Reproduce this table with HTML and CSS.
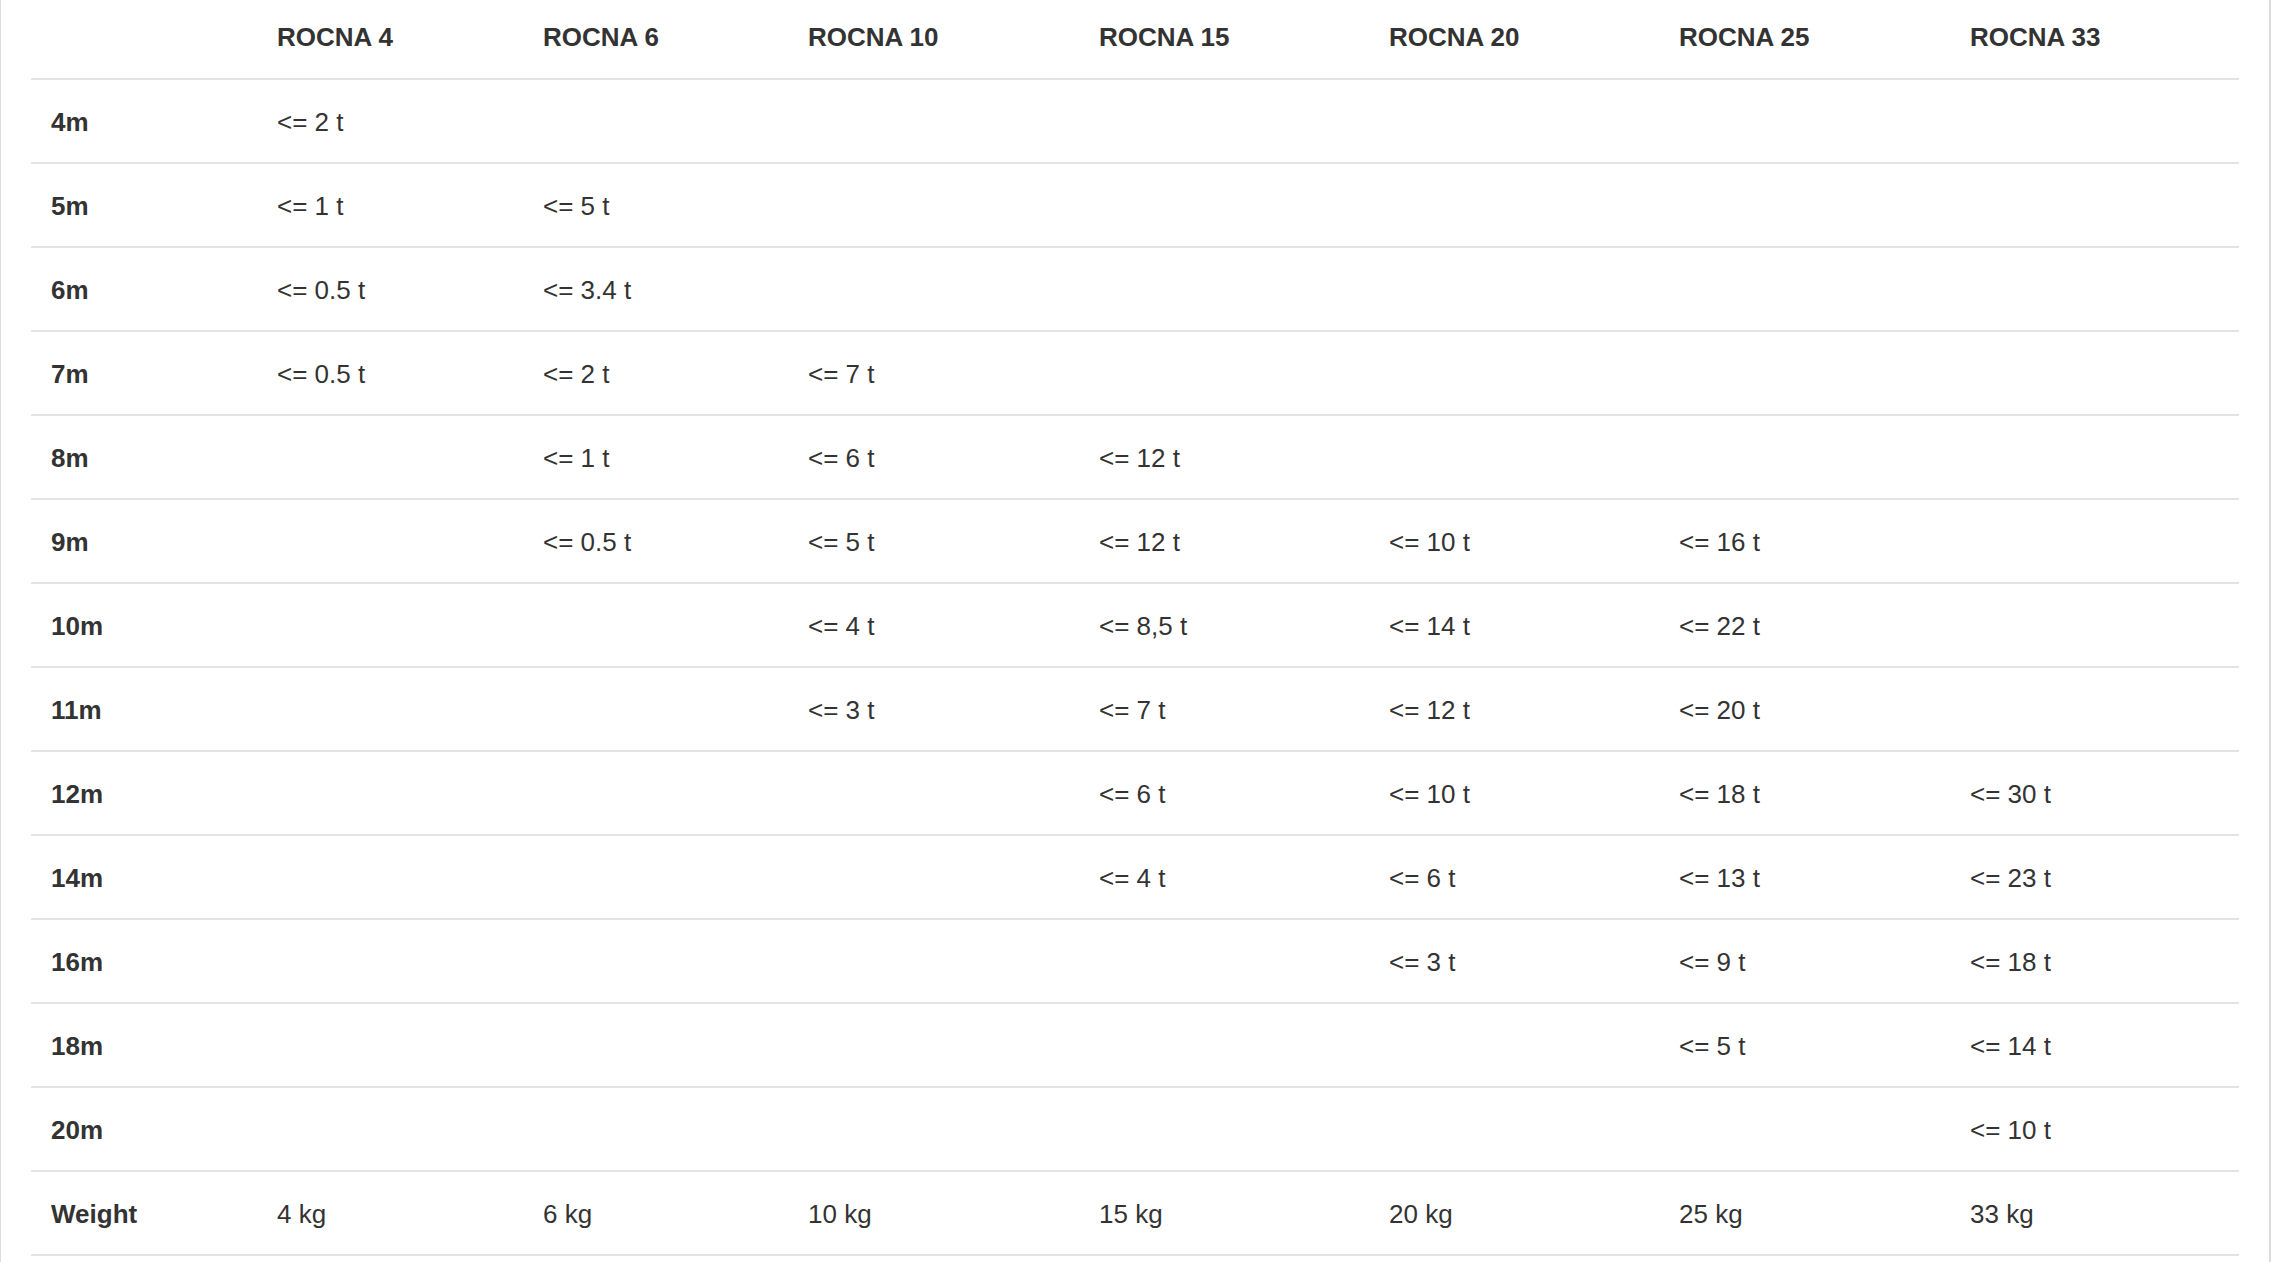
FILE: index.html
```html
<!DOCTYPE html>
<html>
<head>
<meta charset="utf-8">
<link rel="stylesheet" href="styles.css">
</head>
<body>
<div class="page">
<table class="specs">
<colgroup>
<col class="c-label"><col class="c1"><col class="c2"><col class="c3"><col class="c4"><col class="c5"><col class="c6"><col class="c7">
</colgroup>
<thead>
<tr><th></th><th>ROCNA 4</th><th>ROCNA 6</th><th>ROCNA 10</th><th>ROCNA 15</th><th>ROCNA 20</th><th>ROCNA 25</th><th>ROCNA 33</th></tr>
</thead>
<tbody>
<tr><th>4m</th><td>&lt;= 2 t</td><td></td><td></td><td></td><td></td><td></td><td></td></tr>
<tr><th>5m</th><td>&lt;= 1 t</td><td>&lt;= 5 t</td><td></td><td></td><td></td><td></td><td></td></tr>
<tr><th>6m</th><td>&lt;= 0.5 t</td><td>&lt;= 3.4 t</td><td></td><td></td><td></td><td></td><td></td></tr>
<tr><th>7m</th><td>&lt;= 0.5 t</td><td>&lt;= 2 t</td><td>&lt;= 7 t</td><td></td><td></td><td></td><td></td></tr>
<tr><th>8m</th><td></td><td>&lt;= 1 t</td><td>&lt;= 6 t</td><td>&lt;= 12 t</td><td></td><td></td><td></td></tr>
<tr><th>9m</th><td></td><td>&lt;= 0.5 t</td><td>&lt;= 5 t</td><td>&lt;= 12 t</td><td>&lt;= 10 t</td><td>&lt;= 16 t</td><td></td></tr>
<tr><th>10m</th><td></td><td></td><td>&lt;= 4 t</td><td>&lt;= 8,5 t</td><td>&lt;= 14 t</td><td>&lt;= 22 t</td><td></td></tr>
<tr><th>11m</th><td></td><td></td><td>&lt;= 3 t</td><td>&lt;= 7 t</td><td>&lt;= 12 t</td><td>&lt;= 20 t</td><td></td></tr>
<tr><th>12m</th><td></td><td></td><td></td><td>&lt;= 6 t</td><td>&lt;= 10 t</td><td>&lt;= 18 t</td><td>&lt;= 30 t</td></tr>
<tr><th>14m</th><td></td><td></td><td></td><td>&lt;= 4 t</td><td>&lt;= 6 t</td><td>&lt;= 13 t</td><td>&lt;= 23 t</td></tr>
<tr><th>16m</th><td></td><td></td><td></td><td></td><td>&lt;= 3 t</td><td>&lt;= 9 t</td><td>&lt;= 18 t</td></tr>
<tr><th>18m</th><td></td><td></td><td></td><td></td><td></td><td>&lt;= 5 t</td><td>&lt;= 14 t</td></tr>
<tr><th>20m</th><td></td><td></td><td></td><td></td><td></td><td></td><td>&lt;= 10 t</td></tr>
<tr><th>Weight</th><td>4 kg</td><td>6 kg</td><td>10 kg</td><td>15 kg</td><td>20 kg</td><td>25 kg</td><td>33 kg</td></tr>
</tbody>
</table>
</div>
</body>
</html>
```

FILE: styles.css
```css
html, body {
  margin: 0;
  padding: 0;
  background: #ffffff;
}

.page {
  width: 2208px;
  min-height: 100vh;
  padding: 0 30px;
  border-left: 1px solid #dcdcdc;
  border-right: 2px solid #dcdcdc;
  box-sizing: content-box;
  font-family: "Liberation Sans", Arial, Helvetica, sans-serif;
  color: #333333;
}

.specs {
  width: 2208px;
  table-layout: fixed;
  border-collapse: separate;
  border-spacing: 0;
  font-size: 26px;
  line-height: 30px;
}

.c-label { width: 226px; }
.c1 { width: 266px; }
.c2 { width: 265px; }
.c3 { width: 291px; }
.c4 { width: 290px; }
.c5 { width: 290px; }
.c6 { width: 291px; }
.c7 { width: 289px; }

.specs th,
.specs td {
  text-align: left;
  vertical-align: top;
  padding: 27px 20px 25px 20px;
  border-bottom: 2px solid #e3e3e3;
  white-space: nowrap;
}

.specs thead th {
  padding-top: 22px;
  padding-bottom: 26px;
  font-weight: bold;
}

.specs tbody th {
  font-weight: bold;
}

.specs td {
  font-weight: normal;
}
```
